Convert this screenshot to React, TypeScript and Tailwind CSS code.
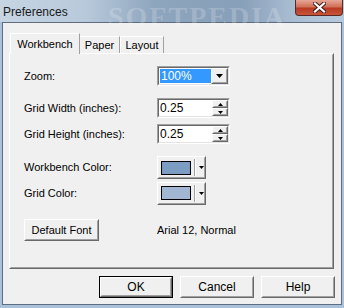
import React from 'react';

const font = { fontFamily: '"Liberation Sans", Arial, sans-serif' };

function Raised({ className = '', children }: { className?: string; children?: React.ReactNode }) {
  return (
    <div className={`border border-t-white border-l-white border-b-[#696969] border-r-[#696969] bg-[#f0f0f0] ${className}`}>
      <div className="w-full h-full border border-t-[#f0f0f0] border-l-[#f0f0f0] border-b-[#a0a0a0] border-r-[#a0a0a0] flex items-center justify-center">
        {children}
      </div>
    </div>
  );
}

function Sunken({ className = '', children }: { className?: string; children?: React.ReactNode }) {
  return (
    <div className={`border border-t-[#a0a0a0] border-l-[#a0a0a0] border-b-white border-r-white ${className}`}>
      <div className="w-full h-full border border-t-[#696969] border-l-[#696969] border-b-[#e3e3e3] border-r-[#e3e3e3] bg-white flex items-center">
        {children}
      </div>
    </div>
  );
}

function Caret({ size = 'lg' }: { size?: 'lg' | 'sm' }) {
  return size === 'lg' ? (
    <svg width="7" height="4" viewBox="0 0 7 4"><path d="M0 0h7L3.5 4z" fill="#000" /></svg>
  ) : (
    <svg width="5" height="3" viewBox="0 0 5 3"><path d="M0 0h5L2.5 3z" fill="#000" /></svg>
  );
}

function SpinBox({ value }: { value: string }) {
  return (
    <Sunken className="w-[73px] h-[20px]">
      <span className="flex-1 pl-[1px] text-[12px] leading-none text-black">{value}</span>
      <div className="flex flex-col w-[16px] h-full">
        <Raised className="h-1/2 w-full">
          <svg width="5" height="3" viewBox="0 0 5 3"><path d="M0 3h5L2.5 0z" fill="#000" /></svg>
        </Raised>
        <Raised className="h-1/2 w-full">
          <Caret size="sm" />
        </Raised>
      </div>
    </Sunken>
  );
}

function ColorButton({ color }: { color: string }) {
  return (
    <Raised className="w-[49px] h-[23px]">
      <div className="flex items-center w-full h-full pl-[2px]">
        <div className="w-[31px] h-[14px] border border-black" style={{ background: color }} />
        <div className="ml-[3px] w-[2px] h-[17px] border-l border-l-[#a0a0a0] border-r border-r-white" />
        <div className="ml-[3px] flex items-center"><Caret size="sm" /></div>
      </div>
    </Raised>
  );
}

function Label({ children }: { children: React.ReactNode }) {
  return <div className="w-[133px] text-[11px] text-black">{children}</div>;
}

function DialogButton({ label, isDefault = false }: { label: string; isDefault?: boolean }) {
  return (
    <div className={`w-[74px] h-[22px] ${isDefault ? 'border border-black' : ''}`}>
      <Raised className="w-full h-full">
        <span className="text-[12px] text-black">{label}</span>
      </Raised>
    </div>
  );
}

export default function App() {
  return (
    <div style={font} className="w-[344px] h-[308px] bg-[#a9c1da] flex flex-col overflow-hidden relative">
      {/* title bar */}
      <div className="h-[22px] flex items-start relative bg-[linear-gradient(90deg,#c7d5e3_0%,#b8c9db_25%,#8ea5be_45%,#889fb9_70%,#a9bdd2_85%,#b7c9dc_100%)]">
        <span className="ml-[3px] mt-[3px] text-[12px] text-[#1a1a1a] z-10">Preferences</span>
        <span className="absolute left-[108px] top-[-4px] text-[28px] font-bold tracking-[2px] text-white/20" style={{ fontFamily: '"Liberation Serif", serif' }}>SOFTPEDIA</span>
        <div className="absolute right-[1px] top-0 w-[48px] h-[16px] rounded-b-[4px] border border-t-0 border-[#5a2a22] bg-[linear-gradient(180deg,#e8a796_0%,#d0705a_45%,#b83a22_55%,#c9553a_100%)] flex items-center justify-center">
          <svg width="13" height="11" viewBox="0 0 13 11">
            <path d="M2 1.5l9 8M11 1.5l-9 8" stroke="#3a1a14" strokeWidth="4" strokeLinecap="square" />
            <path d="M2 1.5l9 8M11 1.5l-9 8" stroke="#fff" strokeWidth="2.2" strokeLinecap="square" />
          </svg>
        </div>
      </div>

      {/* client */}
      <div className="ml-[2px] w-[340px] h-[283px] border border-[#5e6e80] bg-[#f0f0f0] flex flex-col">
        {/* tabs */}
        <div className="ml-[6px] mt-[9px] flex items-end h-[21px]">
          <div className="relative z-10 -mb-[1px] ml-[1px] h-[21px] w-[70px] border border-b-0 border-t-white border-l-white border-r-[#a0a0a0] bg-[#f0f0f0] flex items-center justify-center text-[11px] text-black">
            Workbench
          </div>
          <div className="h-[17px] w-[40px] border border-b-0 border-t-white border-l-0 border-r-[#a0a0a0] flex items-center justify-center text-[11px] text-black">
            Paper
          </div>
          <div className="h-[17px] w-[44px] border border-b-0 border-t-white border-l-white border-r-[#a0a0a0] flex items-center justify-center text-[11px] text-black">
            Layout
          </div>
        </div>
        {/* panel */}
        <div className="ml-[6px] w-[325px] h-[216px] border border-t-white border-l-white border-b-[#696969] border-r-[#696969]">
          <div className="w-full h-full border border-t-[#f0f0f0] border-l-[#f0f0f0] border-b-[#a0a0a0] border-r-[#a0a0a0] pl-[13px] flex flex-col">
            <div className="mt-[11px] h-[20px] flex items-center">
              <Label>Zoom:</Label>
              <Sunken className="w-[73px] h-[20px]">
                <div className="ml-[1px] w-[52px] h-[14px] bg-[#3399ff] text-white text-[12px] leading-[14px] pl-[1px]">100%</div>
                <Raised className="ml-auto w-[17px] h-full">
                  <Caret />
                </Raised>
              </Sunken>
            </div>
            <div className="mt-[12px] h-[20px] flex items-center">
              <Label>Grid Width (inches):</Label>
              <SpinBox value="0.25" />
            </div>
            <div className="mt-[6px] h-[20px] flex items-center">
              <Label>Grid Height (inches):</Label>
              <SpinBox value="0.25" />
            </div>
            <div className="mt-[12px] h-[23px] flex items-center">
              <Label>Workbench Color:</Label>
              <ColorButton color="#7c9cc3" />
            </div>
            <div className="mt-[3px] h-[22px] flex items-center">
              <Label>Grid Color:</Label>
              <ColorButton color="#a2b8d2" />
            </div>
            <div className="mt-[15px] h-[22px] flex items-center">
              <div className="w-[133px]">
                <Raised className="w-[75px] h-[22px]">
                  <span className="text-[11px] text-black">Default Font</span>
                </Raised>
              </div>
              <span className="text-[11px] text-black">Arial 12, Normal</span>
            </div>
          </div>
        </div>
        {/* buttons */}
        <div className="mt-[7px] flex justify-end gap-[7px] mr-[6px]">
          <DialogButton label="OK" isDefault />
          <DialogButton label="Cancel" />
          <DialogButton label="Help" />
        </div>
      </div>
    </div>
  );
}
